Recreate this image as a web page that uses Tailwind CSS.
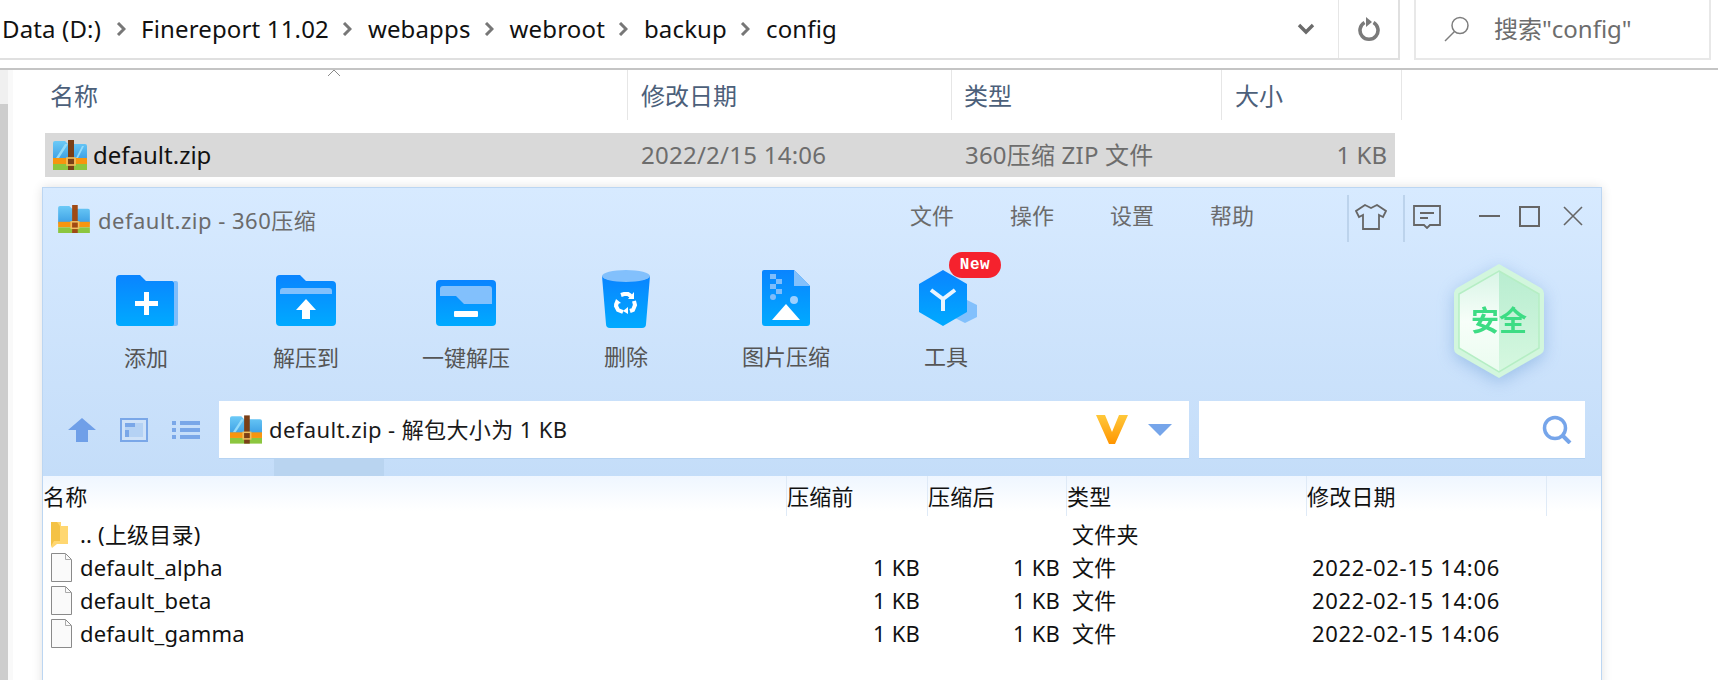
<!DOCTYPE html>
<html lang="zh-CN">
  <head>
    <meta charset="UTF-8" />
    <title>config</title>
    <script src="https://cdn.jsdelivr.net/npm/@tailwindcss/browser@4"></script>
  </head>
  <body class="bg-white overflow-hidden font-['Noto_Sans','Noto_Sans_CJK_SC',sans-serif]">
    <div class="w-[1718px] h-[680px] overflow-hidden flex flex-col">
      <!-- explorer address bar -->
      <div class="h-[70px] shrink-0 border-b-2 border-[#c4c4c4] flex items-start">
        <div class="w-[1400px] h-[60px] border-b-2 border-r-2 border-[#e0e0e0] flex items-center pl-[2px] text-[24px] tracking-[0.15px] text-[#111]">
          <span>Data (D:)</span>
          <svg class="w-[10px] h-[14px] ml-[15px] mr-[15px]" viewBox="0 0 10 14"><path d="M2 1l6 6-6 6" fill="none" stroke="#777" stroke-width="3"/></svg>
          <span>Finereport 11.02</span>
          <svg class="w-[10px] h-[14px] ml-[13px] mr-[16px]" viewBox="0 0 10 14"><path d="M2 1l6 6-6 6" fill="none" stroke="#777" stroke-width="3"/></svg>
          <span>webapps</span>
          <svg class="w-[10px] h-[14px] ml-[13px] mr-[16px]" viewBox="0 0 10 14"><path d="M2 1l6 6-6 6" fill="none" stroke="#777" stroke-width="3"/></svg>
          <span>webroot</span>
          <svg class="w-[10px] h-[14px] ml-[13px] mr-[16px]" viewBox="0 0 10 14"><path d="M2 1l6 6-6 6" fill="none" stroke="#777" stroke-width="3"/></svg>
          <span>backup</span>
          <svg class="w-[10px] h-[14px] ml-[13px] mr-[16px]" viewBox="0 0 10 14"><path d="M2 1l6 6-6 6" fill="none" stroke="#777" stroke-width="3"/></svg>
          <span>config</span>
          <svg class="w-[18px] h-[12px] ml-auto mr-[23px]" viewBox="0 0 18 12"><path d="M2 2l7 7 7-7" fill="none" stroke="#6b6b6b" stroke-width="3.4"/></svg>
          <div class="w-[60px] h-full border-l border-[#e6e6e6] flex items-center justify-center">
            <svg class="w-[22px] h-[26px]" viewBox="0 0 22 26"><path d="M6.5 6.5a9 9 0 1 0 9 0" fill="none" stroke="#7a7a7a" stroke-width="3.6"/><path d="M8 1v10l6-5z" fill="#7a7a7a"/></svg>
          </div>
        </div>
        <div class="w-[297px] h-[60px] ml-[14px] border-b-2 border-x-2 border-[#e8e8e8] flex items-center text-[24px] text-[#6d6d6d]">
          <svg class="w-[28px] h-[28px] ml-[27px]" viewBox="0 0 28 28"><circle cx="17" cy="10.5" r="8" fill="none" stroke="#7d7d7d" stroke-width="1.5"/><path d="M11.5 16.5L2 26" stroke="#7d7d7d" stroke-width="1.5"/></svg>
          <span class="ml-[23px]">搜索"config"</span>
        </div>
      </div>

      <div class="flex flex-1 min-h-0">
        <!-- scrollbar at the far left -->
        <div class="w-[8px] shrink-0 bg-[#f0f0f0] flex flex-col pt-[34px]">
          <div class="flex-1 bg-[#cdcdcd]"></div>
        </div>
        <div class="w-[5px] shrink-0 bg-[#f9f9f9]"></div>

        <div class="flex-1 min-w-0 relative">
          <!-- sort caret -->
          <svg class="absolute left-[314px] top-[-1px] w-[14px] h-[8px]" viewBox="0 0 14 8"><path d="M1 7l6-6 6 6" fill="none" stroke="#8a8a8a"/></svg>

          <!-- explorer column header -->
          <div class="h-[50px] flex text-[24px] text-[#4c607a]">
            <div class="w-[615px] border-r border-[#e6e6e6] pl-[37px] pt-[8px]">名称</div>
            <div class="w-[324px] border-r border-[#e6e6e6] pl-[13px] pt-[8px]">修改日期</div>
            <div class="w-[270px] border-r border-[#e6e6e6] pl-[12px] pt-[8px]">类型</div>
            <div class="w-[180px] border-r border-[#e6e6e6] pl-[13px] pt-[8px]">大小</div>
          </div>

          <!-- selected row -->
          <div class="mt-[13px] ml-[32px] w-[1350px] h-[44px] bg-[#d9d9d9] flex items-center text-[24px] text-[#6d6d6d]">
            <svg class="w-[34px] h-[30px] ml-[8px]" viewBox="0 0 34 30"><defs><linearGradient id="zb" x1="0" y1="0" x2="0" y2="1"><stop offset="0" stop-color="#6ccaf7"/><stop offset="1" stop-color="#3c9fe4"/></linearGradient></defs><path d="M0 3a2 2 0 0 1 2-2h10l3 3h17a2 2 0 0 1 2 2v14H0z" fill="url(#zb)"/><path d="M3 18L12 4h3L6 18zM23 18l6-12h2l-6 12z" fill="#93dbfa"/><path d="M0 18h34v6H0z" fill="#f7950f"/><path d="M0 24h34v6H0z" fill="#8cc63f"/><path d="M15 0h6v30h-6z" fill="#7a3f17"/><rect x="14" y="18" width="8" height="7" fill="none" stroke="#f0c060" stroke-width="1.6"/></svg>
            <span class="w-[548px] ml-[6px] text-[#111]">default.zip</span>
            <span class="w-[324px] tracking-[0.25px]">2022/2/15 14:06</span>
            <span class="tracking-[0.2px]">360压缩 ZIP 文件</span>
            <span class="ml-auto mr-[8px]">1 KB</span>
          </div>

          <!-- 360 zip window -->
          <div class="mt-[10px] ml-[29px] w-[1560px] h-[600px] border border-[#bcd6f2] shadow-[0_0_10px_rgba(0,0,0,0.12)] flex flex-col">
            <div class="h-[288px] shrink-0 bg-gradient-to-b from-[#d7eaff] to-[#c4ddf9] flex flex-col relative">
              <!-- title row -->
              <div class="h-[62px] flex items-start text-[#6b6b6b]">
                <svg class="w-[32px] h-[28px] ml-[15px] mt-[17px]" viewBox="0 0 34 30"><path d="M0 3a2 2 0 0 1 2-2h10l3 3h17a2 2 0 0 1 2 2v14H0z" fill="url(#zb)"/><path d="M0 18h34v6H0z" fill="#f7950f"/><path d="M0 24h34v6H0z" fill="#8cc63f"/><path d="M15 0h6v30h-6z" fill="#a04a15"/><rect x="14" y="18" width="8" height="7" fill="none" stroke="#f0c060" stroke-width="1.6"/></svg>
                <span class="ml-[8px] mt-[17px] text-[22px] leading-[30px] tracking-[0.5px]">default.zip - 360压缩</span>
                <div class="absolute left-[867px] top-[12px] flex gap-[56px] text-[22px] leading-[30px]">
                  <span class="w-[44px]">文件</span><span class="w-[44px]">操作</span><span class="w-[44px]">设置</span><span class="w-[44px]">帮助</span>
                </div>
                <div class="absolute left-[1304px] top-[7px] h-[47px] flex">
                  <div class="w-[56px] h-full border-l-2 border-[#bcd3ec] flex items-center justify-center pr-[10px] pb-[4px]">
                    <svg class="w-[32px] h-[26px]" viewBox="0 0 32 26"><path d="M10 1l6 3 6-3 9 6-3 6-4-2v14H8V11l-4 2-3-6z" fill="none" stroke="#666" stroke-width="1.8"/></svg>
                  </div>
                  <div class="w-[56px] h-full border-l-2 border-[#bcd3ec] flex items-center justify-center pr-[10px] pb-[4px]">
                    <svg class="w-[28px] h-[24px]" viewBox="0 0 28 24"><path d="M1 1h26v19H17l-3 3-3-3H1z" fill="none" stroke="#666" stroke-width="1.8"/><path d="M7 8h14M7 13h8" stroke="#666" stroke-width="1.8"/></svg>
                  </div>
                </div>
                <div class="absolute left-[1436px] top-[27px] w-[21px] h-[2px] bg-[#666]"></div>
                <div class="absolute left-[1476px] top-[18px] w-[21px] h-[21px] border-2 border-[#666]"></div>
                <svg class="absolute left-[1520px] top-[18px] w-[20px] h-[20px]" viewBox="0 0 20 20"><path d="M1 1l18 18M19 1L1 19" stroke="#666" stroke-width="1.6"/></svg>
              </div>

              <!-- toolbar -->
              <div class="flex pl-[23px] h-[150px] text-[22px] text-[#555]">
                <div class="w-[160px] flex flex-col items-center pt-[25px] relative">
                  <svg class="w-[62px] h-[51px] translate-x-[1px]" viewBox="0 0 62 51"><defs><linearGradient id="fb" x1="0" y1="0" x2="0" y2="1"><stop offset="0" stop-color="#0a84ff"/><stop offset="1" stop-color="#00aaff"/></linearGradient></defs><path d="M58 6h2a2 2 0 0 1 2 2v41a2 2 0 0 1-2 2h-4z" fill="#7fbdfb"/><path d="M0 4a4 4 0 0 1 4-4h20l6 6h26a2 2 0 0 1 2 2v41a2 2 0 0 1-2 2H4a4 4 0 0 1-4-4z" fill="url(#fb)"/><path d="M18 25h9v-9h5v9h9v5h-9v9h-5v-9h-9z" fill="#fff" transform="translate(1 1)"/></svg>
                  <span class="mt-[16px] leading-[30px]">添加</span>
                </div>
                <div class="w-[160px] flex flex-col items-center pt-[25px]">
                  <svg class="w-[60px] h-[51px]" viewBox="0 0 60 51"><path d="M0 4a4 4 0 0 1 4-4h20l6 6h26a4 4 0 0 1 4 4v37a4 4 0 0 1-4 4H4a4 4 0 0 1-4-4z" fill="url(#fb)"/><path d="M4 16a3 3 0 0 1 3-3h46a3 3 0 0 1 3 3v3H4z" fill="#82c0fc"/><path d="M30 24l10 11h-6v9h-8v-9h-6z" fill="#fff"/></svg>
                  <span class="mt-[16px] leading-[30px]">解压到</span>
                </div>
                <div class="w-[160px] flex flex-col items-center pt-[30px]">
                  <svg class="w-[60px] h-[46px]" viewBox="0 0 60 46"><path d="M0 4a4 4 0 0 1 4-4h52a4 4 0 0 1 4 4v38a4 4 0 0 1-4 4H4a4 4 0 0 1-4-4z" fill="url(#fb)"/><path d="M4 9a3 3 0 0 1 3-3h46a3 3 0 0 1 3 3v15H28l-8-8H4z" fill="#82c0fc"/><rect x="18" y="31" width="24" height="6" rx="1" fill="#fff"/></svg>
                  <span class="mt-[16px] leading-[30px]">一键解压</span>
                </div>
                <div class="w-[160px] flex flex-col items-center pt-[20px]">
                  <svg class="w-[48px] h-[58px]" viewBox="0 0 48 58"><path d="M0 6l4 48a4 4 0 0 0 4 4h32a4 4 0 0 0 4-4l4-48z" fill="url(#fb)"/><ellipse cx="24" cy="6" rx="24" ry="6" fill="#82c0fc"/><g fill="none" stroke="#fff" stroke-width="4"><path d="M19 25l3-1h4l3 2"/><path d="M32 31l1 4-2 5-3 1"/><path d="M21 42l-5-2-2-4 1-4"/></g><path d="M32 22v7h-6zM26 37v7l-5-3zM12 35l2-6 5 4z" fill="#fff"/></svg>
                  <span class="mt-[13px] leading-[30px]">删除</span>
                </div>
                <div class="w-[160px] flex flex-col items-center pt-[20px]">
                  <svg class="w-[48px] h-[56px]" viewBox="0 0 48 56"><path d="M2 0h30l16 16v37a3 3 0 0 1-3 3H3a3 3 0 0 1-3-3V2a2 2 0 0 1 2-2z" fill="url(#fb)"/><path d="M32 0l16 16H32z" fill="#82c0fc"/><path d="M8 4h6v5H8zM14 9h6v5h-6zM8 14h6v5H8zM14 19h6v5h-6z" fill="#7fbdfb"/><circle cx="11" cy="27" r="3" fill="#7fbdfb"/><circle cx="32" cy="30" r="4" fill="#9dd0ff"/><path d="M10 50l14-16 14 16z" fill="#fff"/></svg>
                  <span class="mt-[15px] leading-[30px]">图片压缩</span>
                </div>
                <div class="w-[160px] flex flex-col items-center pt-[20px] relative">
                  <svg class="w-[58px] h-[56px] translate-x-[2px]" viewBox="0 0 58 56"><path d="M46 29l12 6v12l-12 6-12-6z" fill="#82c0fc"/><path d="M24 0l24 14v28L24 56 0 42V14z" fill="url(#fb)"/><path d="M12 20l12 9 12-9M24 29v12" fill="none" stroke="#eaf4ff" stroke-width="4"/></svg>
                  <span class="mt-[15px] leading-[30px]">工具</span>
                  <span class="absolute left-[83px] top-[2px] w-[52px] h-[26px] rounded-full bg-[#f5222d] text-white text-[16px] leading-[26px] font-bold text-center font-['Liberation_Mono',monospace] tracking-[0.5px]">New</span>
                </div>
              </div>

              <!-- shield -->
              <div class="absolute left-[1409px] top-[75px] w-[94px] h-[116px] drop-shadow-[0_4px_8px_rgba(70,130,200,0.35)]">
                <svg class="w-full h-full" viewBox="0 0 94 116"><defs><linearGradient id="sl" x1="0" y1="0" x2="0" y2="1"><stop offset="0" stop-color="#d8f5e6"/><stop offset="0.5" stop-color="#f7fef9"/><stop offset="1" stop-color="#eafcef"/></linearGradient><linearGradient id="sr" x1="0" y1="0" x2="0" y2="1"><stop offset="0" stop-color="#b8edd0"/><stop offset="1" stop-color="#d6f8e0"/></linearGradient></defs><path d="M47 1l42 24q3 2 3 5v56q0 3-3 5l-42 24-42-24q-3-2-3-5V30q0-3 3-5z" fill="#d2f6dd"/><path d="M47 8L7 31v54l40 24z" fill="url(#sl)"/><path d="M47 8l40 23v54l-40 24z" fill="url(#sr)"/><path d="M47 8l40 23v54l-40 24-40-24V31z" fill="none" stroke="#b5eec4" stroke-width="1.5"/></svg>
                <span class="absolute inset-0 flex items-center justify-center pb-[4px] text-[28px] font-bold text-[#3ddc84] font-['Noto_Sans_CJK_SC',sans-serif]">安全</span>
              </div>

              <!-- nav and path row -->
              <div class="flex items-start mt-[1px] pl-[25px]">
                <svg class="w-[28px] h-[24px] mt-[17px]" viewBox="0 0 28 24"><path d="M14 0l14 12h-8v12H8V12H0z" fill="#6f9fe8"/></svg>
                <svg class="w-[28px] h-[24px] mt-[17px] ml-[24px]" viewBox="0 0 28 24"><rect x="1" y="1" width="26" height="22" fill="#cfe2f8" stroke="#7aa7e8" stroke-width="2"/><rect x="5" y="5" width="18" height="14" fill="#b5d2f4"/><path d="M5 5h10v4H5zM5 12h4v7H5z" fill="#7aa7e8"/></svg>
                <svg class="w-[28px] h-[20px] mt-[19px] ml-[24px]" viewBox="0 0 28 20"><path d="M0 1h4v4H0zM0 8h4v4H0zM0 15h4v4H0zM8 1h20v4H8zM8 8h20v4H8zM8 15h20v4H8z" fill="#7aa7e8"/></svg>
                <div class="w-[970px] h-[58px] ml-[19px] bg-white border-b border-[#b6d3f2] flex items-center relative">
                  <svg class="w-[32px] h-[29px] ml-[11px]" viewBox="0 0 34 30"><path d="M0 3a2 2 0 0 1 2-2h10l3 3h17a2 2 0 0 1 2 2v14H0z" fill="url(#zb)"/><path d="M3 18L12 4h3L6 18z" fill="#93dbfa"/><path d="M0 18h34v6H0z" fill="#f7950f"/><path d="M0 24h34v6H0z" fill="#8cc63f"/><path d="M15 0h6v30h-6z" fill="#7a3f17"/><rect x="14" y="18" width="8" height="7" fill="none" stroke="#f0c060" stroke-width="1.6"/></svg>
                  <span class="ml-[7px] text-[22px] text-[#1a1a1a] tracking-[0.4px]">default.zip - 解包大小为 1 KB</span>
                  <svg class="w-[32px] h-[29px] ml-auto mr-[20px]" viewBox="0 0 32 29"><defs><linearGradient id="vg" x1="0" y1="0" x2="0" y2="1"><stop offset="0" stop-color="#ffc83a"/><stop offset="1" stop-color="#ff9500"/></linearGradient></defs><path d="M0 0h9l7 17 7-17h9L19 29h-6z" fill="url(#vg)"/></svg>
                  <svg class="w-[24px] h-[12px] mr-[17px]" viewBox="0 0 24 12"><path d="M0 0h24L12 12z" fill="#76a5ea"/></svg>
                </div>
                <div class="w-[386px] h-[58px] ml-[10px] bg-white border-b border-[#b6d3f2] flex items-center justify-end pr-[13px]">
                  <svg class="w-[30px] h-[29px]" viewBox="0 0 30 29"><circle cx="13" cy="13" r="10.5" fill="none" stroke="#76a5ea" stroke-width="3.5"/><path d="M20 20l8 8" stroke="#76a5ea" stroke-width="4"/></svg>
                </div>
              </div>
              <div class="absolute left-[231px] bottom-0 w-[110px] h-[17px] bg-[#b9d4f0]"></div>
            </div>

            <!-- archive list -->
            <div class="flex-1 bg-white text-[22px] text-[#111] tracking-[0.2px]">
              <div class="h-[35px] grid grid-cols-[743px_141px_139px_240px_241px] bg-gradient-to-b from-[#eff6ff] to-white leading-[40px]">
                <span>名称</span>
                <span class="border-l border-[#dfeaf7]">压缩前</span>
                <span class="border-l border-[#dfeaf7]">压缩后</span>
                <span class="border-l border-[#dfeaf7]">类型</span>
                <span class="border-x border-[#dfeaf7]">修改日期</span>
              </div>
              <div class="pt-[7px]">
                <div class="h-[33px] grid grid-cols-[742px_141px_139px_240px_1fr] items-center pl-[1px]">
                  <span class="flex items-center pl-[7px]">
                    <svg class="w-[18px] h-[26px]" viewBox="0 0 18 26"><path d="M0 0h10v4h7v18H6l-5 4-1-2z" fill="#ffd771"/><path d="M0 0h6l3 4v15H3l-3 5z" fill="#f4c245"/></svg>
                    <span class="ml-[11px]">.. (上级目录)</span>
                  </span>
                  <span></span><span></span>
                  <span class="pl-[6px]">文件夹</span><span></span>
                </div>
                <div class="h-[33px] grid grid-cols-[742px_141px_139px_240px_1fr] items-center pl-[1px]">
                  <span class="flex items-center pl-[7px]">
                    <svg class="w-[21px] h-[29px]" viewBox="0 0 21 29"><path d="M.5.5h14l6 6v22H.5z" fill="#fafafa" stroke="#8a8a8a"/><path d="M14.5.5v6h6" fill="none" stroke="#aaa"/></svg>
                    <span class="ml-[8px]">default_alpha</span>
                  </span>
                  <span class="text-right pr-[7px]">1 KB</span>
                  <span class="text-right pr-[6px]">1 KB</span>
                  <span class="pl-[6px]">文件</span>
                  <span class="pl-[6px] tracking-[0.7px]">2022-02-15 14:06</span>
                </div>
                <div class="h-[33px] grid grid-cols-[742px_141px_139px_240px_1fr] items-center pl-[1px]">
                  <span class="flex items-center pl-[7px]">
                    <svg class="w-[21px] h-[29px]" viewBox="0 0 21 29"><path d="M.5.5h14l6 6v22H.5z" fill="#fafafa" stroke="#8a8a8a"/><path d="M14.5.5v6h6" fill="none" stroke="#aaa"/></svg>
                    <span class="ml-[8px]">default_beta</span>
                  </span>
                  <span class="text-right pr-[7px]">1 KB</span>
                  <span class="text-right pr-[6px]">1 KB</span>
                  <span class="pl-[6px]">文件</span>
                  <span class="pl-[6px] tracking-[0.7px]">2022-02-15 14:06</span>
                </div>
                <div class="h-[33px] grid grid-cols-[742px_141px_139px_240px_1fr] items-center pl-[1px]">
                  <span class="flex items-center pl-[7px]">
                    <svg class="w-[21px] h-[29px]" viewBox="0 0 21 29"><path d="M.5.5h14l6 6v22H.5z" fill="#fafafa" stroke="#8a8a8a"/><path d="M14.5.5v6h6" fill="none" stroke="#aaa"/></svg>
                    <span class="ml-[8px]">default_gamma</span>
                  </span>
                  <span class="text-right pr-[7px]">1 KB</span>
                  <span class="text-right pr-[6px]">1 KB</span>
                  <span class="pl-[6px]">文件</span>
                  <span class="pl-[6px] tracking-[0.7px]">2022-02-15 14:06</span>
                </div>
              </div>
            </div>
          </div>
        </div>
      </div>
    </div>
  </body>
</html>
